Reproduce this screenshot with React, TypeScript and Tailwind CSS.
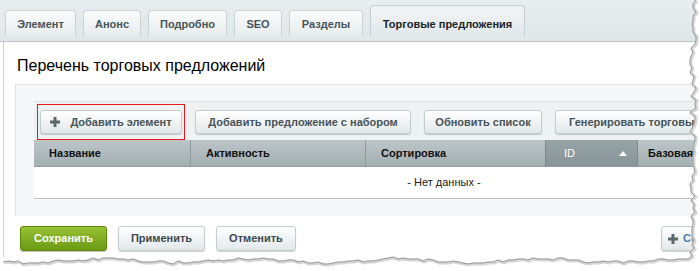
import React from "react";

const tabs = [
  { label: "Элемент", w: 71 },
  { label: "Анонс", w: 58 },
  { label: "Подробно", w: 79 },
  { label: "SEO", w: 48 },
  { label: "Разделы", w: 74 },
];

function rand(seed: number) {
  const x = Math.sin(seed * 12.9898) * 43758.5453;
  return x - Math.floor(x);
}

function tornPath() {
  const pts: [number, number][] = [];
  for (let y = 0; y <= 256; y += 4) {
    const x = 690 + Math.round(rand(y + 1) * 6);
    pts.push([x, y]);
  }
  for (let x = 688; x >= 0; x -= 5) {
    const y = 257 + Math.round(rand(x + 7) * 3 + Math.sin(x / 23) * 2 + 2);
    pts.push([x, y]);
  }
  return pts;
}

function TornEdge() {
  const pts = tornPath();
  const line = pts.map((p, i) => `${i === 0 ? "M" : "L"}${p[0]},${p[1]}`).join(" ");
  const fill = `${line} L0,271 L700,271 L700,0 Z`;
  return (
    <svg className="pointer-events-none absolute left-0 top-0" width={700} height={271} viewBox="0 0 700 271">
      <path d={fill} fill="#ffffff" />
      <path d={line} fill="none" stroke="#d6d6d6" strokeWidth={3} transform="translate(1,1)" />
      <path d={line} fill="none" stroke="#9a9a9a" strokeWidth={1} />
    </svg>
  );
}

function Btn({ children, w }: { children: React.ReactNode; w: number }) {
  return (
    <div
      className="flex h-[24px] shrink-0 items-center justify-center overflow-hidden whitespace-nowrap rounded-[3px] border border-[#c3cccf] bg-gradient-to-b from-[#ffffff] to-[#e2e8ea] text-[11px] font-bold text-[#475458] shadow-[0_1px_1px_rgba(0,0,0,0.18)]"
      style={{ width: w }}
    >
      {children}
    </div>
  );
}

function Plus({ cls }: { cls: string }) {
  return (
    <svg width="10" height="10" viewBox="0 0 10 10" className={cls}>
      <rect x="3.5" y="0" width="3" height="10" fill="#5d686c" />
      <rect x="0" y="3.5" width="10" height="3" fill="#5d686c" />
    </svg>
  );
}

export default function App() {
  return (
    <div className="relative h-[271px] w-[700px] overflow-hidden bg-white font-['Liberation_Sans',Arial,sans-serif]">
      {/* tab bar */}
      <div className="flex h-[37px] items-end gap-[7px] bg-gradient-to-b from-[#e9eef0] to-[#dfe7e9] pl-[5px]">
        {tabs.map((t) => (
          <div
            key={t.label}
            className="flex h-[27px] shrink-0 items-center justify-center rounded-t-[4px] border border-b-0 border-[#cad3d6] bg-gradient-to-b from-[#fbfcfc] to-[#e5ebed] pt-[1px] text-[11px] font-bold text-[#46545a]"
            style={{ width: t.w }}
          >
            {t.label}
          </div>
        ))}
        <div className="flex h-[32px] w-[155px] shrink-0 items-center justify-center rounded-t-[4px] border border-b-0 border-[#c6cfd2] bg-gradient-to-b from-[#f2f5f6] to-[#e1e8ea] pt-[5px] text-[11px] font-bold text-[#1c2326]">
          Торговые предложения
        </div>
      </div>
      <div className="h-[5px] border-b border-[#bac4c7] bg-[#e1e8ea]" />
      {/* content */}
      <div className="ml-[3px] border-l border-[#c8d1d4] bg-white">
        <div className="pl-[13px] pt-[13px] text-[16px] leading-[21px] text-[#000]">
          Перечень торговых предложений
        </div>
        <div className="ml-[11px] mt-[8px] overflow-hidden border-l border-t border-[#dce3e5] bg-[#f5f7f8] pb-[17px] pl-[18px] pt-[16px]">
          <div className="relative flex h-[39px] gap-[13px] border-t border-[#dde3e5] bg-[#eef2f3] pl-[6px] pt-[8px]">
            <div className="absolute left-[3px] top-[2px] z-10 h-[36px] w-[148px] border border-[#e8191c]" />
            <Btn w={142}>
              <Plus cls="mr-[10px] shrink-0" />
              Добавить элемент
            </Btn>
            <Btn w={216}>Добавить предложение с набором</Btn>
            <Btn w={118}>Обновить список</Btn>
            <div className="flex h-[24px] w-[230px] shrink-0 items-center overflow-hidden whitespace-nowrap rounded-[3px] border border-[#c3cccf] bg-gradient-to-b from-[#ffffff] to-[#e2e8ea] pl-[13px] text-[11px] font-bold text-[#475458] shadow-[0_1px_1px_rgba(0,0,0,0.18)]">
              Генерировать торговые предложения
            </div>
          </div>
          <div className="flex h-[27px] items-center overflow-hidden whitespace-nowrap border-b border-[#8f9b9e] bg-gradient-to-b from-[#bcc6c8] to-[#a4afb2] text-[11px] font-bold text-[#111]">
            <div className="flex h-full w-[157px] shrink-0 items-center border-r border-[#8f9b9e] pl-[15px]">Название</div>
            <div className="flex h-full w-[175px] shrink-0 items-center border-r border-[#8f9b9e] pl-[15px]">Активность</div>
            <div className="flex h-full w-[179px] shrink-0 items-center pl-[15px]">Сортировка</div>
            <div className="flex h-full w-[93px] shrink-0 items-center justify-between border-x border-[#7c898c] bg-gradient-to-b from-[#97a4a7] to-[#87959a] pl-[18px] pr-[10px] font-normal text-white">
              <span>ID</span>
              <svg width="8" height="5" viewBox="0 0 8 5">
                <path d="M0,5 L4,0 L8,5 Z" fill="#ffffff" />
              </svg>
            </div>
            <div className="flex h-full shrink-0 items-center pl-[10px]">Базовая цена</div>
          </div>
          <div className="flex h-[32px] items-center justify-center border-b border-[#bcc4c7] bg-white text-[11px] text-[#222]">
            <span className="ml-[154px]">- Нет данных -</span>
          </div>
        </div>
        <div className="flex h-[41px] items-start gap-[11px] overflow-hidden pl-[16px] pt-[10px]">
          <div className="flex h-[25px] w-[87px] shrink-0 items-center justify-center rounded-[3px] border border-[#5f8a0c] bg-gradient-to-b from-[#97c233] to-[#6c9a13] text-[11px] font-bold text-white shadow-[0_1px_1px_rgba(0,0,0,0.25)]">
            Сохранить
          </div>
          <div className="flex h-[25px] w-[87px] shrink-0 items-center justify-center rounded-[3px] border border-[#c3cccf] bg-gradient-to-b from-[#ffffff] to-[#e2e8ea] text-[11px] font-bold text-[#3c4a4f] shadow-[0_1px_1px_rgba(0,0,0,0.18)]">
            Применить
          </div>
          <div className="flex h-[25px] w-[80px] shrink-0 items-center justify-center rounded-[3px] border border-[#c3cccf] bg-gradient-to-b from-[#ffffff] to-[#e2e8ea] text-[11px] font-bold text-[#3c4a4f] shadow-[0_1px_1px_rgba(0,0,0,0.18)]">
            Отменить
          </div>
          <div className="ml-[354px] flex h-[25px] w-[80px] shrink-0 items-center whitespace-nowrap rounded-[3px] border border-[#c3cccf] bg-gradient-to-b from-[#ffffff] to-[#e2e8ea] pl-[6px] text-[11px] font-bold text-[#4a7fb0] shadow-[0_1px_1px_rgba(0,0,0,0.18)]">
            <Plus cls="mr-[5px] shrink-0" />
            Создать
          </div>
        </div>
      </div>
      <TornEdge />
    </div>
  );
}
